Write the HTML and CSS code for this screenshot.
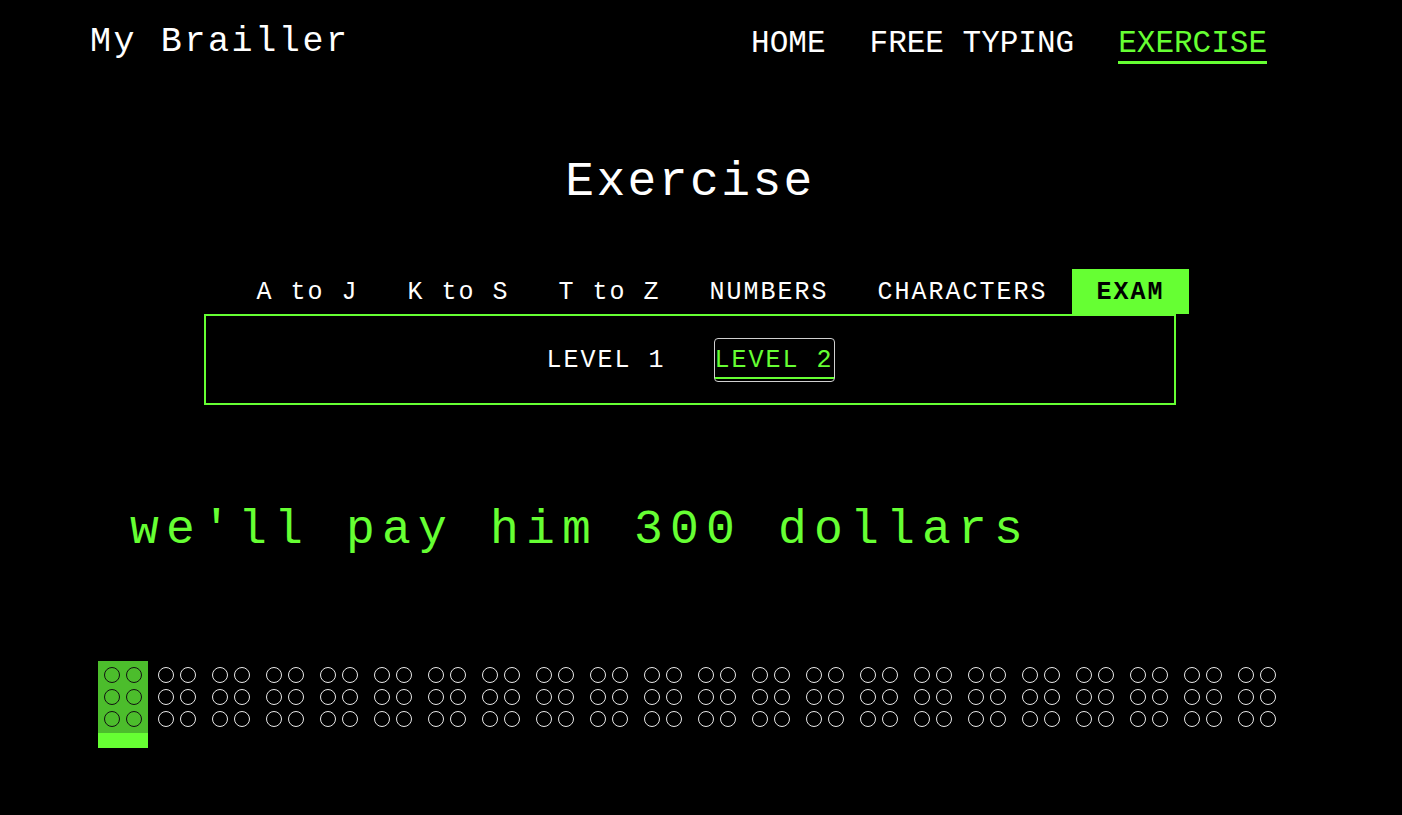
FILE: index.html
```html
<!DOCTYPE html>
<html lang="en">
<head>
<meta charset="utf-8">
<title>My Brailler</title>
<link rel="stylesheet" href="styles.css">
</head>
<body>
<header class="topbar">
  <div class="logo">My Brailler</div>
  <nav class="nav">
    <a class="nav-link">HOME</a>
    <a class="nav-link">FREE TYPING</a>
    <a class="nav-link active">EXERCISE</a>
  </nav>
</header>
<main class="main">
  <h1 class="title">Exercise</h1>
  <div class="tabs">
    <span class="tab">A to J</span>
    <span class="tab">K to S</span>
    <span class="tab">T to Z</span>
    <span class="tab">NUMBERS</span>
    <span class="tab">CHARACTERS</span>
    <span class="tab active">EXAM</span>
  </div>
  <div class="levels">
    <button class="level"><span class="level-label">LEVEL 1</span></button>
    <button class="level active"><span class="level-label">LEVEL 2</span></button>
  </div>
  <p class="sentence">we'll pay him 300 dollars</p>
  <div class="cells" id="cells"></div>
</main>
<script src="script.js"></script>
</body>
</html>
```
FILE: styles.css
```css
* { box-sizing: border-box; }
html, body { margin: 0; padding: 0; }
body {
  background: #000;
  color: #fff;
  font-family: "Liberation Mono", "DejaVu Sans Mono", monospace;
  width: 1402px;
  height: 815px;
  overflow: hidden;
}
.topbar {
  display: flex;
  justify-content: space-between;
  align-items: flex-start;
  padding: 24px 135px 0 90px;
  height: 64px;
}
.logo {
  font-size: 35px;
  line-height: 35px;
  letter-spacing: 2.6px;
  margin-top: 1px;
}
.nav {
  display: flex;
  gap: 44px;
  margin-top: 4px;
}
.nav-link {
  font-family: "Liberation Mono", monospace;
  font-size: 31px;
  line-height: 31px;
  color: #fff;
  padding-bottom: 2px;
  border-bottom: 3px solid transparent;
}
.nav-link.active {
  color: #66ff33;
  border-bottom-color: #66ff33;
}
.main { display: block; }
.title {
  margin: 94px 0 0 204px;
  width: 972px;
  text-align: center;
  font-weight: normal;
  font-size: 48px;
  line-height: 48px;
  letter-spacing: 2.4px;
}
.tabs {
  display: flex;
  margin: 63px 0 0 232px;
  height: 45px;
}
.tab {
  font-size: 25px;
  letter-spacing: 2px;
  line-height: 43px;
  padding: 2px 24.5px 0;
  height: 45px;
  white-space: pre;
}
.tab.active {
  background: #66ff33;
  color: #000;
  font-weight: bold;
}
.levels {
  margin-left: 204px;
  width: 972px;
  height: 91px;
  border: 2px solid #66ff33;
  display: flex;
  justify-content: center;
  align-items: center;
  gap: 47px;
}
.level {
  font-family: "Liberation Mono", monospace;
  font-size: 25px;
  letter-spacing: 2px;
  background: transparent;
  color: #fff;
  border: 1px solid transparent;
  border-radius: 4px;
  height: 44px;
  padding: 10px 0 2px;
  margin: 0;
}
.level.active {
  color: #66ff33;
  border-color: #d0d0d0;
}
.level-label {
  display: block;
  line-height: 24px;
  padding-bottom: 4px;
  border-bottom: 2px solid transparent;
  white-space: pre;
}
.level.active .level-label { border-bottom-color: #66ff33; }
.sentence {
  margin: 101px 0 0;
  padding-left: 130px;
  font-size: 48px;
  line-height: 48px;
  letter-spacing: 7.2px;
  color: #66ff33;
  white-space: pre;
}
.cells {
  display: flex;
  gap: 4px;
  margin: 107px 0 0 98px;
}
.cell {
  width: 50px;
  display: flex;
  flex-direction: column;
}
.dots {
  display: grid;
  grid-template-columns: 16px 16px;
  grid-auto-rows: 16px;
  gap: 6px;
  padding: 6px;
  height: 72px;
}
.dot {
  width: 16px;
  height: 16px;
  border-radius: 50%;
  border: 1px solid #e8e8e8;
}
.cell.current .dots { background: #4cbd2c; }
.cell.current .dot { border-color: #111; }
.cell.current .bar {
  height: 15px;
  background: #66ff33;
}
```
FILE: script.js
```js
(function () {
  var wrap = document.getElementById('cells');
  for (var i = 0; i < 22; i++) {
    var cell = document.createElement('div');
    cell.className = 'cell' + (i === 0 ? ' current' : '');
    var dots = document.createElement('div');
    dots.className = 'dots';
    for (var j = 0; j < 6; j++) {
      var d = document.createElement('span');
      d.className = 'dot';
      dots.appendChild(d);
    }
    cell.appendChild(dots);
    var bar = document.createElement('div');
    bar.className = 'bar';
    cell.appendChild(bar);
    wrap.appendChild(cell);
  }
})();
```
